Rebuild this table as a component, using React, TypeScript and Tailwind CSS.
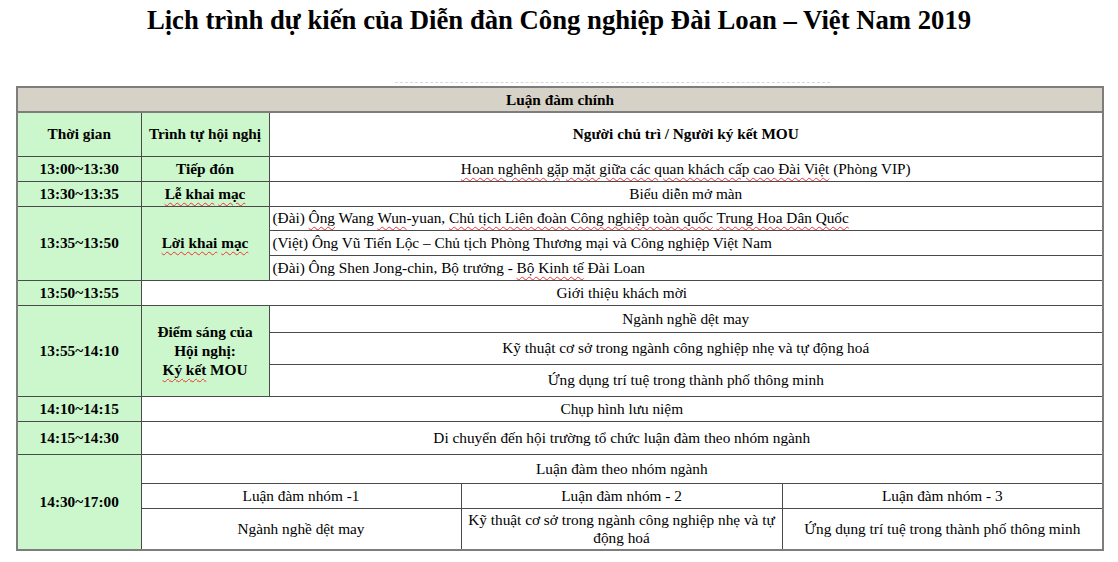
import React from "react";

const GREEN = "bg-[#ccf7cc]";

function W({ children }: { children: React.ReactNode }) {
  // spell-check style red squiggle
  return (
    <span className="underline decoration-wavy decoration-[#e33] decoration-1 underline-offset-[3px]">
      {children}
    </span>
  );
}

const cell = "border border-[#4a4a4a] px-1 text-center align-middle";
const left = "border border-[#4a4a4a] pl-[3px] text-left align-middle";

export default function App() {
  return (
    <div className="w-[1118px] h-[562px] bg-white text-black font-['Liberation_Serif',serif] overflow-hidden">
      <h1 className="pt-[5px] text-center text-[26.7px] leading-[30px] font-bold">
        Lịch trình dự kiến của Diễn đàn Công nghiệp Đài Loan – Việt Nam 2019
      </h1>

      <div className="mt-[47px] ml-[395px] w-[435px] border-t border-dashed border-[#d8d8d8]" />

      <table className="mt-[3px] ml-[16px] w-[1086px] table-fixed border-collapse border-2 border-[#7d7d7d] text-[15.3px] leading-[18px]">
        <colgroup>
          <col className="w-[124px]" />
          <col className="w-[128px]" />
          <col className="w-[192px]" />
          <col className="w-[321px]" />
          <col className="w-[321px]" />
        </colgroup>
        <tbody>
          <tr className="h-[25px] bg-[#d6d2c7]">
            <td colSpan={5} className={`${cell} font-bold border-2 border-[#7d7d7d]`}>
              Luận đàm chính
            </td>
          </tr>
          <tr className="h-[44px]">
            <td className={`${cell} ${GREEN} font-bold`}>Thời gian</td>
            <td className={`${cell} ${GREEN} font-bold`}>Trình tự hội nghị</td>
            <td colSpan={3} className={`${cell} font-bold`}>
              Người chủ trì / Người ký kết MOU
            </td>
          </tr>
          <tr className="h-[25px]">
            <td className={`${cell} ${GREEN} font-bold`}>13:00~13:30</td>
            <td className={`${cell} ${GREEN} font-bold`}>Tiếp đón</td>
            <td colSpan={3} className={cell}>
              <W>Hoan nghênh gặp mặt giữa các quan khách cấp cao Đài Việt</W> (Phòng VIP)
            </td>
          </tr>
          <tr className="h-[25px]">
            <td className={`${cell} ${GREEN} font-bold`}>13:30~13:35</td>
            <td className={`${cell} ${GREEN} font-bold`}>
              <W>Lễ khai</W> <W>mạc</W>
            </td>
            <td colSpan={3} className={cell}>
              Biểu diễn mở màn
            </td>
          </tr>
          <tr className="h-[24px]">
            <td rowSpan={3} className={`${cell} ${GREEN} font-bold`}>
              13:35~13:50
            </td>
            <td rowSpan={3} className={`${cell} ${GREEN} font-bold`}>
              <W>Lời khai</W> <W>mạc</W>
            </td>
            <td colSpan={3} className={left}>
              (Đài) <W>Ông</W> Wang <W>Wun</W>-yuan, <W>Chủ tịch Liên đoàn Công nghiệp toàn quốc</W>{" "}
              <W>Trung Hoa Dân Quốc</W>
            </td>
          </tr>
          <tr className="h-[25px]">
            <td colSpan={3} className={left}>
              (Việt) Ông Vũ Tiến Lộc – Chủ tịch Phòng Thương mại và Công nghiệp Việt Nam
            </td>
          </tr>
          <tr className="h-[25px]">
            <td colSpan={3} className={left}>
              (Đài) Ông Shen Jong-chin, Bộ trưởng - <W>Bộ Kinh tế</W> Đài Loan
            </td>
          </tr>
          <tr className="h-[25px]">
            <td className={`${cell} ${GREEN} font-bold`}>13:50~13:55</td>
            <td colSpan={4} className={cell}>
              Giới thiệu khách mời
            </td>
          </tr>
          <tr className="h-[27px]">
            <td rowSpan={3} className={`${cell} ${GREEN} font-bold`}>
              13:55~14:10
            </td>
            <td rowSpan={3} className={`${cell} ${GREEN} font-bold leading-[19px]`}>
              Điểm sáng của
              <br />
              Hội nghị:
              <br />
              <W>Ký kết</W> MOU
            </td>
            <td colSpan={3} className={cell}>
              Ngành nghề dệt may
            </td>
          </tr>
          <tr className="h-[32px]">
            <td colSpan={3} className={cell}>
              Kỹ thuật cơ sở trong ngành công nghiệp nhẹ và tự động hoá
            </td>
          </tr>
          <tr className="h-[32px]">
            <td colSpan={3} className={cell}>
              Ứng dụng trí tuệ trong thành phố thông minh
            </td>
          </tr>
          <tr className="h-[25px]">
            <td className={`${cell} ${GREEN} font-bold`}>14:10~14:15</td>
            <td colSpan={4} className={cell}>
              Chụp hình lưu niệm
            </td>
          </tr>
          <tr className="h-[33px]">
            <td className={`${cell} ${GREEN} font-bold`}>14:15~14:30</td>
            <td colSpan={4} className={cell}>
              Di chuyển đến hội trường tổ chức luận đàm theo nhóm ngành
            </td>
          </tr>
          <tr className="h-[29px]">
            <td rowSpan={3} className={`${cell} ${GREEN} font-bold`}>
              14:30~17:00
            </td>
            <td colSpan={4} className={cell}>
              Luận đàm theo nhóm ngành
            </td>
          </tr>
          <tr className="h-[25px]">
            <td colSpan={2} className={cell}>
              Luận đàm nhóm -1
            </td>
            <td className={cell}>Luận đàm nhóm - 2</td>
            <td className={cell}>Luận đàm nhóm - 3</td>
          </tr>
          <tr className="h-[42px]">
            <td colSpan={2} className={cell}>
              Ngành nghề dệt may
            </td>
            <td className={cell}>Kỹ thuật cơ sở trong ngành công nghiệp nhẹ và tự động hoá</td>
            <td className={cell}>Ứng dụng trí tuệ trong thành phố thông minh</td>
          </tr>
        </tbody>
      </table>
    </div>
  );
}
